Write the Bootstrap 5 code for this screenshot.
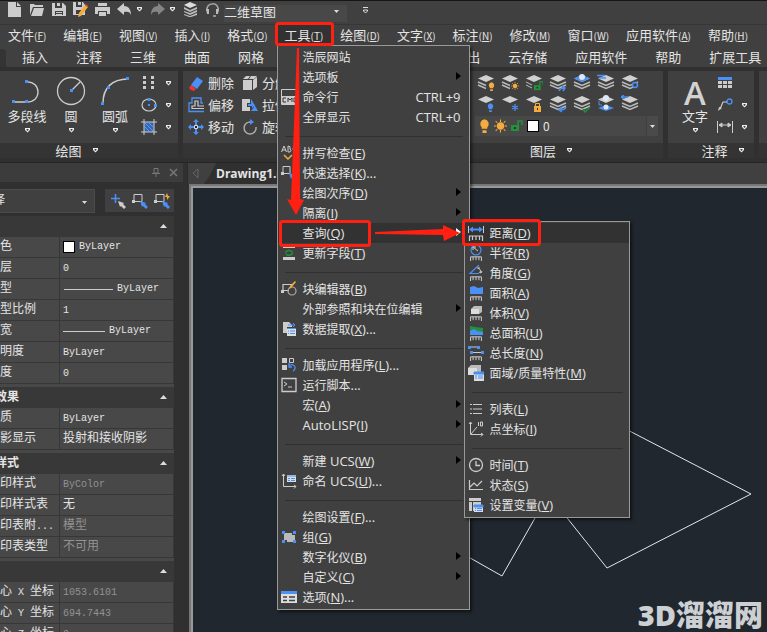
<!DOCTYPE html>
<html lang="zh-CN">
<head>
<meta charset="utf-8">
<meta name="viewport" content="width=device-width, initial-scale=1">
<title>Drawing1.dwg</title>
<link href="https://cdn.jsdelivr.net/npm/bootstrap@5.3.0/dist/css/bootstrap.min.css" rel="stylesheet">
<style>
:root{--face:#404040;--dark:#303030;--line:#353535;--ink:#e4e4e4;--blue:#4a90f7}
body{background:var(--dark);color:var(--ink);font:13px/20px "Open Sans","Noto Sans CJK SC",sans-serif;overflow:hidden}
button,select{font:inherit;color:inherit;border:0;background:none;padding:0}
svg{display:block;flex:none}
.cjk{font-family:"Noto Sans CJK SC",sans-serif}
.i15{width:15px;height:15px}.i16{width:16px;height:16px}.i18{width:18px;height:18px}.i32{width:32px;height:32px}
.caret{width:7px;height:5px}
.titlebar{height:25px;border-top:1px solid #161616;border-bottom:1px solid #363636;background:var(--face);gap:7px;padding:1px 0 0 7px}
.workspace{width:123px;height:17px;line-height:14px;padding-bottom:4px;background:#484848;appearance:none;border-radius:0}
.pick{position:relative}.pick svg{position:absolute;right:7px;top:7px;pointer-events:none}
.menubar{height:21px;background:var(--face);gap:1px}
.menubar .top-btn{padding:0 8px;height:20px;line-height:20px;white-space:nowrap}
.menubar small{font-size:10px}
.top-btn.open{background:#323232}
.tabs-row{height:21px;background:var(--face);padding-left:22px;gap:28px;line-height:21px}
.tabs-row button{white-space:nowrap}
.tab-now{width:6px;height:18px;background:#343434;margin:3px -12px 0 -22px;border-radius:0 4px 0 0;flex:none}
.ribbon{padding:4px 0;gap:5px;background:var(--dark);border-bottom:1px solid #252525}
.rpanel{background:var(--face);display:flex;flex-direction:column;flex:none}
.rbody{height:72px;padding:0 5px}
.rtitle{height:15px;background:#343434;line-height:13px;gap:10px}
.w-draw{width:178px}.w-mod{width:252px}.w-lay{width:223px}.w-ann{width:86px}
.bigbtn{width:44px;display:flex;flex-direction:column;align-items:center;line-height:17px;white-space:nowrap;padding-top:4px}
.bigbtn .glyph{font:600 33px/36px "Open Sans",sans-serif;color:#d2d2d2;height:32px}
.rows3{display:grid;grid-template-rows:repeat(3,22px);align-content:start;align-items:center;padding-top:1px}
.layers{display:grid;grid-template-columns:repeat(7,18px);gap:3px 6px;padding:3px 0 0 32px}
.laybox{margin:3px 0 0 30px;gap:1px;height:20px}
.laybox .cur{width:171px;background:#484848;gap:4px;padding-left:4px;font-size:12px}
.laybox button{width:11px;background:#4a4a4a}
.swatch{width:12px;height:12px;background:#fff;border:1px solid #000;flex:none}
/* property palette, partly scrolled off the left edge */
.palette{width:215px;margin-left:-32px;background:var(--dark);font:12px/20px "Liberation Mono","Noto Sans CJK SC",monospace;flex:none;overflow:hidden}
.phead{height:19px;background:#3c3c3c;gap:9px;padding-right:5px;color:#777}
.ptools{height:23px;margin:7px 0 4px;gap:10px}
.ptools .what{width:127px;background:var(--face);border:1px solid #4b4b4b;border-radius:0;appearance:none;height:24px;padding-left:0}
.ptools .pick{height:24px}.ptools .pick svg{top:11px}
.pbtns{background:var(--face);width:69px;height:23px;gap:6px}
.plist{width:206px;background:#484848}
.phd{height:21px;width:100%;background:#383838;padding:0 7px 0 3px;font-weight:700}
.plist table{table-layout:fixed;width:100%;margin-bottom:3px;border-collapse:separate;border-spacing:0}
.plist tr{height:21px}
.plist th,.plist td{height:21px;font-weight:400;padding:0;border:0 solid #373737;border-bottom-width:1px;white-space:nowrap;line-height:18px}
.plist th{width:92px;padding-left:20px;border-right-width:1px}
.plist td{padding-left:3px;border-right-width:1px}
.plist i{font-style:normal;font-size:10px;line-height:14px}
.off{color:#929292}
.docs{min-width:0}
.doctabs{height:21px;background:var(--face);border-left:1px solid #2b2b2b}
.doctab{background:#303030;padding:0 14px 0 12px;clip-path:polygon(12px 0,100% 0,100% 100%,0 100%,6px 12px);font-weight:700;font-size:12px}
.board{background:#20272f;border:solid #999;border-width:2px 0 0 2px;outline:2px solid #777;position:relative;overflow:hidden;margin-top:2px}
.board svg{position:absolute;left:0;top:0;width:100%;height:100%}
.mark3d{position:absolute;right:4px;bottom:0;font:900 29px/34px "Open Sans","Noto Sans CJK SC",sans-serif;color:#cdd0d3}
.cmenu{--bs-dropdown-min-width:0;background:var(--face);border:1px solid #999;border-radius:0;color:var(--ink);padding:1px 0 2px;margin:0;box-shadow:2px 2px 3px #0008;font:13px/20px "Open Sans","Noto Sans CJK SC",sans-serif}
.main-menu{left:0;top:20px;width:193px;z-index:10}
.sub-menu{left:186px;top:-2px;width:166px}
.cmenu .dropdown-item{height:20px;line-height:20px;padding:0 8px 0 3px;color:var(--ink);display:flex;align-items:center;gap:6px;font-size:13px}
.cmenu .dropdown-item:hover,.cmenu .dropdown-item.on{background:#323232}
.cmenu .dropdown-item b{font-weight:400;font-size:12px}
.cmenu .dropdown-item>span:first-of-type{white-space:pre}
.cmenu .gap-line{height:16px;padding:9px 6px 0 7px}
.cmenu .gap-line hr{margin:0;border:0;height:1px;background:#303030;opacity:1}
.cmenu .noico{padding-left:25px}
.more{margin:-3px 0 0 auto;width:5px;height:8px}
.redmarks{position:absolute;left:0;top:-6px;z-index:1200;pointer-events:none;overflow:visible}
</style>
</head>
<body>
<svg width="0" height="0" class="position-absolute" aria-hidden="true">
<symbol id="caret" viewBox="0 0 7 5"><path d="M1 0h5v2L3.500 4.500 1 2z" fill="#eee"/><path d="M2.500 1h2v1l-1 1-1-1z" fill="#404040"/></symbol>
<symbol id="drop" viewBox="0 0 7 5"><path d="M1 1h5L3.500 4z" fill="#ddd"/></symbol>
<symbol id="up" viewBox="0 0 7 5"><path d="M0 4h7L3.500 0z" fill="#ddd"/></symbol>
<symbol id="arrow" viewBox="0 0 5 8"><path d="M0 0l5 4-5 4z" fill="#000"/></symbol>
<symbol id="new" viewBox="0 0 15 15"><path d="M1 0h8v5h5v10H1zM10 0l4 4h-4z" fill="#ccc"/></symbol>
<symbol id="open" viewBox="0 0 15 15"><path d="M1 13V2h4l1 1h8v2H4z M5 6h10l-2 8H2z" fill="#ccc"/></symbol>
<symbol id="save" viewBox="0 0 15 15"><path d="M1 1h3v5h7V1h1l3 3v10H1z M6 1h3v3H6z" fill="#ccc"/><path d="M4 9h8v4H4z" fill="#404040"/><path d="M5 10h6v1H5zM5 12h6v1H5z" fill="#ccc"/></symbol>
<symbol id="saveas" viewBox="0 0 15 15"><path d="M0 0h3v5h6V0h1l2 3v10H0z M5 0h3v3H5z" fill="#ccc"/><path d="M3 8h6v4H3z" fill="#404040"/><path d="M12 3l3 2-7 9-3 1 1-4z" fill="#f5ac3c"/><path d="M12 3l1-1 2 2-1 1z" fill="#e44"/></symbol>
<symbol id="print" viewBox="0 0 15 15"><path d="M3 1h9v3H3zM0 5h15v7h-3V9H3v3H0zM4 10h7v4H4z" fill="#ccc"/></symbol>
<symbol id="undo" viewBox="0 0 15 15"><path d="M0 7l7-6v3c5 0 7 4 7 9-1-3-3-4-7-3v3z" fill="#ccc"/></symbol>
<symbol id="redo" viewBox="0 0 15 15"><path d="M15 7L8 1v3C3 4 1 8 1 13c1-3 3-4 7-3v3z" fill="#858585"/></symbol>
<symbol id="stack" viewBox="0 0 15 15"><path d="M1 3l6-3 7 3-7 3z" fill="#ddd"/><path d="M1 5l6 3 7-3v2L7 10 1 7zM1 9l6 2 7-3v2l-7 3-6-3zM1 12l6 2 7-3v2l-6 2H6l-5-2z" fill="#bbb"/></symbol>
<symbol id="ear" viewBox="0 0 15 15"><path d="M2 9C0 0 15-1 13 9M11 14h-3" fill="none" stroke="#aaa" stroke-width="1.500"/><path d="M1 7h3v5H2zM11 7h3l-1 5h-2z" fill="#bbb"/></symbol>
<symbol id="pline" viewBox="0 0 32 32"><path d="M15 7c16-1 16 21 0 20H3" fill="none" stroke="#ccc" stroke-width="1.300"/><path d="M14 5h3v3h-3zM1 25h3v3H1zM14 25h3v3h-3z" fill="#4a90f7"/></symbol>
<symbol id="circle" viewBox="0 0 32 32"><circle cx="16" cy="16" r="13.500" fill="none" stroke="#ccc" stroke-width="1.300"/><path d="M17 15l8-8" stroke="#ccc" stroke-width="1.300"/><path d="M15 14h3v3h-3z" fill="#4a90f7"/></symbol>
<symbol id="arc" viewBox="0 0 32 32"><path d="M4 28C4 13 13 4 29 4" fill="none" stroke="#ccc" stroke-width="1.500"/><path d="M27 2h3v3h-3zM8 11h3v3H8zM2 27h3v3H2z" fill="#4a90f7"/></symbol>
<symbol id="dots" viewBox="0 0 16 16"><path d="M2 1h3v3H2zM10 1h3v3h-3zM2 6h3v3H2zM10 6h3v3h-3zM2 11h3v3H2zM10 11h3v3h-3z" fill="#ccc"/></symbol>
<symbol id="ell" viewBox="0 0 16 16"><ellipse cx="8" cy="8" rx="7" ry="6" fill="none" stroke="#ccc" stroke-width="1.200"/><path d="M6.500 1h3v3h-3zM13 7h3v3h-3zM7 7h2v2H7z" fill="#4a90f7"/></symbol>
<symbol id="hatch" viewBox="0 0 16 16"><path d="M3 3h10v10H3z" fill="#3767ad"/><path d="M0 3h16M0 13h16M3 0v16M13 0v16" stroke="#ccc"/><path d="M4 8l4 4M4 4l8 8M8 4l4 4" stroke="#5b9bf5"/></symbol>
<symbol id="erase" viewBox="0 0 16 16"><path d="M9 2l6 4-6 8-6-4z" fill="#4a90f7"/><path d="M3 10l5 4-2 2-3-1-2-2z" fill="#e33"/></symbol>
<symbol id="offset" viewBox="0 0 16 16"><path d="M16 14.500H1V6h3V1h9v5h2" fill="none" stroke="#4a90f7" stroke-width="1.300"/><path d="M16 11.500H4V9h3V4h3v5h6" fill="none" stroke="#ccc" stroke-width="1.200"/></symbol>
<symbol id="move" viewBox="0 0 16 16"><path d="M8 0l3 3H9v3H7V3H5zM8 16l3-3H9v-3H7v3H5zM0 8l3-3v2h3v2H3v2zM16 8l-3-3v2h-3v2h3v2z" fill="#4a90f7"/><path d="M6.500 6.500h3v3h-3z" fill="#222" stroke="#ddd"/></symbol>
<symbol id="box" viewBox="0 0 16 16"><path d="M1 5h9v10H1zM1 4l3-3h4l-2 3zM9 1h6l-3 3H7zM11 5l4-3v10l-4 3z" fill="#ccc"/></symbol>
<symbol id="stretch" viewBox="0 0 16 16"><path d="M0 2h8v4H5v4h3v4H0z" fill="#ccc"/><path d="M9 2l7 12H9l3-4-3-2zM6 7h4V5l3 3-3 3V9H6z" fill="#4a90f7"/></symbol>
<symbol id="rot" viewBox="0 0 16 16"><path d="M9 3a6 6 0 1 0 5 5" fill="none" stroke="#aaa" stroke-width="1.500"/><path d="M8 0l4 3-4 3z" fill="#4a90f7"/></symbol>
<symbol id="lay" viewBox="0 0 18 18"><path d="M1 4.500L9 1l8 3.500L9 8z" fill="#d0d0d0"/><path d="M1 8l8 3.500L17 8M1 11l8 3.500 8-3.500" fill="none" stroke="#bbb" stroke-width="1.400"/></symbol>
<symbol id="lay1" viewBox="0 0 18 18"><path d="M1 4.500L9 1l8 3.500L9 8z" fill="#d0d0d0"/><path d="M1 8l8 3.500M1 11l8 3.500" fill="none" stroke="#bbb" stroke-width="1.400"/></symbol>
<symbol id="top" viewBox="0 0 18 18"><path d="M1 4.500L9 1l8 3.500L9 8z" fill="#d0d0d0"/></symbol>
<symbol id="bulb" viewBox="0 0 8 10"><path d="M4 0a3.500 3.500 0 0 1 2 6v1H2V6a3.500 3.500 0 0 1 2-6zM2.500 8h3v2h-3z"/></symbol>
<symbol id="sun" viewBox="0 0 16 16"><circle cx="8" cy="8" r="4.500" fill="#f5ac3c"/><path d="M8 0v3M8 13v3M0 8h3M13 8h3M2 2l2 2M12 12l2 2M2 14l2-2M12 4l2-2" stroke="#f5ac3c" stroke-width="1.300"/></symbol>
<symbol id="lock" viewBox="0 0 12 12"><path d="M0 5h8v6H0z" stroke="none"/><path d="M7 5V1h4v4" fill="none" stroke-width="1.500"/><path d="M3 7h2v2H3z" fill="#303030" stroke="none"/></symbol>
<symbol id="tbl" viewBox="0 0 16 16"><path d="M1 2h14v3H1z" fill="#4a90f7"/><path d="M1 6h4v3H1zM6 6h4v3H6zM11 6h4v3h-4zM1 10h4v3H1zM6 10h4v3H6zM11 10h4v3h-4z" fill="#ccc"/></symbol>
<symbol id="lead" viewBox="0 0 16 16"><circle cx="12.500" cy="4.500" r="2.500" fill="none" stroke="#4a90f7" stroke-width="1.300"/><path d="M10 5H6L3 12" fill="none" stroke="#ccc" stroke-width="1.200"/><path d="M1 14l1-4 3 1z" fill="#ccc"/></symbol>
<symbol id="dim" viewBox="0 0 16 16"><path d="M.5 2v12M15.500 2v12M2 6h12M2 6l3-2v4zM14 6l-3-2v4z" stroke="#ccc" fill="#ccc"/></symbol>
<symbol id="ruler" viewBox="0 0 16 6"><path d="M1.500 6V1h13v5M4.500 1v4M8 1v4M11.500 1v4" fill="none" stroke="#ccc" stroke-width="1.200"/></symbol>
<symbol id="cursor" viewBox="0 0 8 8"><path d="M0 0l6 2-1 1 3 3-2 2-3-3-1 1z"/></symbol>
</svg>

<div class="d-flex flex-column vh-100">
<header class="flex-shrink-0 position-relative z-3 cjk">
  <div class="titlebar d-flex align-items-start">
    <button aria-label="新建"><svg class="i15"><use href="#new"/></svg></button>
    <button aria-label="打开"><svg class="i15"><use href="#open"/></svg></button>
    <button aria-label="保存"><svg class="i15"><use href="#save"/></svg></button>
    <button aria-label="另存为"><svg class="i15"><use href="#saveas"/></svg></button>
    <button aria-label="打印"><svg class="i15"><use href="#print"/></svg></button>
    <button aria-label="撤销" class="d-flex align-items-center gap-1"><svg class="i15"><use href="#undo"/></svg><svg class="caret"><use href="#caret"/></svg></button>
    <button aria-label="重做" class="d-flex align-items-center gap-1"><svg class="i15"><use href="#redo"/></svg><svg class="caret"><use href="#caret"/></svg></button>
    <button aria-label="图层"><svg class="i15"><use href="#stack"/></svg></button>
    <div class="d-flex gap-1"><svg class="i15"><use href="#ear"/></svg>
      <div class="pick"><select class="workspace" aria-label="工作空间"><option>二维草图</option></select><svg class="caret"><use href="#drop"/></svg></div></div>
    <button aria-label="自定义" class="ms-2 mt-1"><svg width="7" height="8"><path d="M1 1.500h5" stroke="#ddd"/><path d="M1.500 4h4v1l-2 2-2-2z" fill="none" stroke="#ddd"/></svg></button>
  </div>

  <nav class="menubar d-flex">
    <button class="top-btn">文件<small>(<u>F</u>)</small></button>
    <button class="top-btn">编辑<small>(<u>E</u>)</small></button>
    <button class="top-btn">视图<small>(<u>V</u>)</small></button>
    <button class="top-btn">插入<small>(<u>I</u>)</small></button>
    <button class="top-btn">格式<small>(<u>O</u>)</small></button>
    <div class="position-relative">
      <button class="top-btn open">工具<small>(<u>T</u>)</small></button>
      <div class="dropdown-menu show cmenu main-menu">
        <button class="dropdown-item noico"><span><b>浩辰网站</b></span></button>
        <button class="dropdown-item noico"><span><b>选项板</b></span><svg class="more"><use href="#arrow"/></svg></button>
        <button class="dropdown-item"><svg class="i16"><path d="M.5.500h15v15H.5z" fill="none" stroke="#ccc"/><path d="M1 7h15v9H1z" fill="#ccc"/><path d="M5 9H2v4h3M7 13V9l2 2 2-2v4M13 13V9h2v4z" fill="none" stroke="#333"/></svg><span><b>命令行</b></span><span class="ms-auto">CTRL+9</span></button>
        <button class="dropdown-item noico"><span><b>全屏显示</b></span><span class="ms-auto">CTRL+0</span></button>
        <div class="gap-line"><hr></div>
        <button class="dropdown-item"><svg class="i16" viewBox="0 0 16 16"><path d="M.5 7L3 1l2.500 6M1 5h4M7 1v6h2q2-2 0-3 1-3-2-3M15 2q-3-1-3 2t3 2" fill="none" stroke="#ccc"/><path d="M3 10l4 4 4-4" fill="none" stroke="#f5ac3c" stroke-width="1.500"/></svg><span><b>拼写检查</b>(<u>E</u>)</span></button>
        <button class="dropdown-item"><svg class="i16" viewBox="0 0 16 16"><path d="M2 1.500h7v7H2z" fill="none" stroke="#ccc"/><path d="M0 7h3v3H0z" fill="#ccc"/><use href="#cursor" x="8" y="8" width="8" height="8" fill="#4a90f7"/></svg><span><b>快速选择</b>(<u>K</u>)...</span></button>
        <button class="dropdown-item noico"><span><b>绘图次序</b>(<u>D</u>)</span><svg class="more"><use href="#arrow"/></svg></button>
        <button class="dropdown-item noico"><span><b>隔离</b>(<u>I</u>)</span><svg class="more"><use href="#arrow"/></svg></button>
        <div class="position-relative">
          <button class="dropdown-item noico on"><span><b>查询</b>(<u>Q</u>)</span><svg class="more" viewBox="0 0 5 8"><path d="M0 0l5 4-5 4z" fill="#fff"/></svg></button>
          <div class="dropdown-menu show cmenu sub-menu">
            <button class="dropdown-item on"><svg class="i16" viewBox="0 0 16 16"><path d="M.5 1v7M15.500 1v7" stroke="#ccc"/><path d="M1 4.500l4-3v2h6v-2l4 3-4 3v-2H5v2z" fill="#4a90f7"/><use href="#ruler" y="10" width="16" height="6"/></svg><span><b>距离</b>(<u>D</u>)</span></button>
            <button class="dropdown-item"><svg class="i16" viewBox="0 0 16 16"><circle cx="8" cy="5" r="5" fill="none" stroke="#4a90f7" stroke-width="1.200"/><path d="M5 2l5 4M5 2h3M5 2v3" stroke="#ccc"/><use href="#ruler" x="1" y="11" width="14" height="5"/></svg><span><b>半径</b>(<u>R</u>)</span></button>
            <button class="dropdown-item"><svg class="i16" viewBox="0 0 16 16"><path d="M11 0L2 8.500h9" fill="none" stroke="#4a90f7" stroke-width="1.200"/><path d="M10 3q3 1 3 5M9 3h3M11 7l2 1 1-2" fill="none" stroke="#ccc"/><use href="#ruler" x="1" y="11" width="14" height="5"/></svg><span><b>角度</b>(<u>G</u>)</span></button>
            <button class="dropdown-item"><svg class="i16" viewBox="0 0 16 16"><path d="M2 2l4-1 4 2 5-1v7H2z" fill="#4a90f7"/><use href="#ruler" x="1" y="11" width="14" height="5"/></svg><span><b>面积</b>(<u>A</u>)</span></button>
            <button class="dropdown-item"><svg class="i16" viewBox="0 0 16 16"><path d="M3 4l3-3h8v6l-3 2H3z" fill="#bbb"/><path d="M3 4h8v5H3z" fill="#ddd"/><use href="#ruler" x="1" y="11" width="14" height="5"/></svg><span><b>体积</b>(<u>V</u>)</span></button>
            <button class="dropdown-item"><svg class="i16" viewBox="0 0 16 16"><path d="M2 1l5 1 8 1v6H2z" fill="#21913c"/><path d="M2 6l4-2 3 2 6 1v3H2z" fill="#4a90f7"/><use href="#ruler" x="1" y="11" width="14" height="5"/></svg><span><b>总面积</b>(<u>U</u>)</span></button>
            <button class="dropdown-item"><svg class="i16" viewBox="0 0 16 16"><path d="M1 2h10M4 7.500h10" stroke="#ccc"/><path d="M0 1h3v3H0zM9 1h3v3H9zM2 6h3v3H2zM13 6h3v3h-3z" fill="#4a90f7"/><use href="#ruler" y="11" width="16" height="5"/></svg><span><b>总长度</b>(<u>N</u>)</span></button>
            <button class="dropdown-item"><svg class="i16" viewBox="0 0 16 16"><path d="M0 3l3-3h10v7l-3 3H0z" fill="#bbb"/><path d="M0 3h9v7H0z" fill="#ddd"/><path d="M6 7h10v9H6z" fill="#ddd"/><path d="M6 7h10v2H6zM7 11h2M10 11h5M7 13h2M10 13h5" fill="#4a90f7" stroke="#4a90f7"/></svg><span><b>面域</b>/<b>质量特性</b>(<u>M</u>)</span></button>
            <div class="gap-line"><hr></div>
            <button class="dropdown-item"><svg class="i16" viewBox="0 0 16 16"><path d="M2 3.500h2M5 3.500h9M2 8h2M5 8h9M2 12.500h2M5 12.500h9" stroke="#ccc"/></svg><span><b>列表</b>(<u>L</u>)</span></button>
            <button class="dropdown-item"><svg class="i16" viewBox="0 0 16 16"><path d="M2.500 1v12.500H15M3 13l6-7M1 3l1.500-2L4 3M13 12l2 1.500-2 2M10.500 1v4M12.500 1v4h2V1z" fill="none" stroke="#ccc"/></svg><span><b>点坐标</b>(<u>I</u>)</span></button>
            <div class="gap-line"><hr></div>
            <button class="dropdown-item"><svg class="i16" viewBox="0 0 16 16"><circle cx="8" cy="8" r="6.500" fill="none" stroke="#ccc" stroke-width="1.300"/><path d="M8 4v4.500h4" fill="none" stroke="#ccc" stroke-width="1.300"/></svg><span><b>时间</b>(<u>T</u>)</span></button>
            <button class="dropdown-item"><svg class="i16" viewBox="0 0 16 16"><path d="M1.500 3v9.500H15M2 10l4-4 3 3 5-5" fill="none" stroke="#ccc" stroke-width="1.200"/></svg><span><b>状态</b>(<u>S</u>)</span></button>
            <button class="dropdown-item"><svg class="i16" viewBox="0 0 16 16"><path d="M1 1h12v3H1zM1 5h3v9H1zM5 5h8v9H5z" fill="#ccc"/><path d="M6 8h9v7H6z" fill="#ddd"/><path d="M6 8h9v2H6zM7 11.500h1M9 11.500h5M7 13.500h1M9 13.500h5" fill="#4a90f7" stroke="#4a90f7"/></svg><span><b>设置变量</b>(<u>V</u>)</span></button>
          </div>
        </div>
        <button class="dropdown-item"><svg class="i16" viewBox="0 0 16 16"><path d="M2 0h12v3H2zM2 12h12v3H2z" fill="#ccc"/><path d="M5 8a3 2 0 0 1 6-1M11 7a3 2 0 0 1-6 2" fill="none" stroke="#21913c" stroke-width="1.500"/></svg><span><b>更新字段</b>(<u>T</u>)</span></button>
        <div class="gap-line"><hr></div>
        <button class="dropdown-item"><svg class="i16" viewBox="0 0 16 16"><path d="M12 3.500H2v6h6" fill="none" stroke="#ccc" stroke-width="1.200"/><circle cx="11" cy="10" r="4" fill="none" stroke="#aaa" stroke-width="1.200"/><path d="M0 9h3v3H0z" fill="#ccc"/><path d="M8 8l1-3 5-5 1 1-5 6z" fill="#f5ac3c"/></svg><span><b>块编辑器</b>(<u>B</u>)</span></button>
        <button class="dropdown-item noico"><span><b>外部参照和块在位编辑</b></span><svg class="more"><use href="#arrow"/></svg></button>
        <button class="dropdown-item"><svg class="i16" viewBox="0 0 16 16"><path d="M2 1h6l3 3v2H6v6H2z" fill="#ccc"/><path d="M7 4h7M12 2l2 2-2 2" stroke="#4a90f7" fill="none"/><path d="M6 7h9v8H6z" fill="#ddd"/><path d="M6 7.500h9M7 10h1M9 10h5M7 12.500h1M9 12.500h5" stroke="#4a90f7"/></svg><span><b>数据提取</b>(<u>X</u>)...</span></button>
        <div class="gap-line"><hr></div>
        <button class="dropdown-item"><svg class="i16" viewBox="0 0 16 16"><path d="M1 1h5v5H1zM1 8h5v5H1z" fill="#ccc"/><path d="M8.500 1.500h4v4h-4z" fill="none" stroke="#ccc"/><path d="M8 9c4-4 9 2 4 5M8 6v4h3" fill="none" stroke="#4a90f7" stroke-width="1.300"/></svg><span><b>加载应用程序</b>(<u>L</u>)...</span></button>
        <button class="dropdown-item"><svg class="i16" viewBox="0 0 16 16"><path d="M1 1.500h14v13H1z" fill="none" stroke="#ccc" stroke-width="1.300"/><path d="M3 5l3 2-3 2M7 10h4" fill="none" stroke="#ccc"/></svg><span><b>运行脚本</b>...</span></button>
        <button class="dropdown-item noico"><span><b>宏</b>(<u>A</u>)</span><svg class="more"><use href="#arrow"/></svg></button>
        <button class="dropdown-item noico"><span>AutoLISP(<u>I</u>)</span><svg class="more"><use href="#arrow"/></svg></button>
        <div class="gap-line"><hr></div>
        <button class="dropdown-item noico"><span><b>新建</b> UCS(<u>W</u>)</span><svg class="more"><use href="#arrow"/></svg></button>
        <button class="dropdown-item"><svg class="i16" viewBox="0 0 16 16"><path d="M2.500 1v12.500H15M1 3l1.500-2L4 3M13 12l2 1.500-2 2" fill="none" stroke="#ccc"/><path d="M6 2h9v7H6z" fill="#ddd"/><path d="M6 3h9M7 5.500h2M10 5.500h4M7 7.500h2M10 7.500h4" stroke="#4a90f7"/></svg><span><b>命名</b> UCS(<u>U</u>)...</span></button>
        <div class="gap-line"><hr></div>
        <button class="dropdown-item noico"><span><b>绘图设置</b>(<u>F</u>)...</span></button>
        <button class="dropdown-item"><svg class="i16" viewBox="0 0 16 16"><path d="M3 4h8v3H7v4H3zM6 6h8v7H6z" fill="#bbb"/><path d="M1 2h3v3H1zM12 2h3v3h-3zM1 11h3v3H1zM12 11h3v3h-3z" fill="#4a90f7"/></svg><span><b>组</b>(<u>G</u>)</span></button>
        <button class="dropdown-item noico"><span><b>数字化仪</b>(<u>B</u>)</span><svg class="more"><use href="#arrow"/></svg></button>
        <button class="dropdown-item noico"><span><b>自定义</b>(<u>C</u>)</span><svg class="more"><use href="#arrow"/></svg></button>
        <button class="dropdown-item"><svg class="i16" viewBox="0 0 16 16"><path d="M0 2h16v3H0z" fill="#4a90f7"/><path d="M0 5h16v9H0z" fill="#ddd"/><path d="M2 8h4M8 8h6M2 11.500h4M8 11.500h6" stroke="#404040" stroke-width="1.500"/></svg><span><b>选项</b>(<u>N</u>)...</span></button>
      </div>
      <svg class="redmarks" width="280" height="230" viewBox="276 19 280 230" aria-hidden="true">
        <g fill="none" stroke="#ff2012" stroke-width="3"><rect x="275.500" y="23.500" width="56" height="21" rx="2"/><rect x="279.500" y="221.500" width="89" height="24" rx="2"/><rect x="462.500" y="220.500" width="76" height="24" rx="2"/></g>
        <path d="M296 48h2l1 151 4 1-8 15-9-16 4 1zM374 232l68-3v-4l17 8-16 8-1-6-68-1z" fill="#ff2012"/>
      </svg>
    </div>
    <button class="top-btn">绘图<small>(<u>D</u>)</small></button>
    <button class="top-btn">文字<small>(<u>X</u>)</small></button>
    <button class="top-btn">标注<small>(<u>N</u>)</small></button>
    <button class="top-btn">修改<small>(<u>M</u>)</small></button>
    <button class="top-btn">窗口<small>(<u>W</u>)</small></button>
    <button class="top-btn">应用软件<small>(<u>A</u>)</small></button>
    <button class="top-btn">帮助<small>(<u>H</u>)</small></button>
  </nav>

  <div class="tabs-row d-flex">
    <span class="tab-now"></span>
    <button>插入</button><button>注释</button><button>三维</button><button>曲面</button><button>网格</button><button>参数</button><button>视图</button><button>管理</button><button>输出</button><button>云存储</button><button>应用软件</button><button>帮助</button><button>扩展工具</button>
  </div>

  <div class="ribbon d-flex">
    <section class="rpanel w-draw">
      <div class="rbody d-flex">
        <button class="bigbtn"><svg class="i32"><use href="#pline"/></svg>多段线<svg class="caret mt-1"><use href="#caret"/></svg></button>
        <button class="bigbtn"><svg class="i32"><use href="#circle"/></svg>圆<svg class="caret mt-1"><use href="#caret"/></svg></button>
        <button class="bigbtn"><svg class="i32"><use href="#arc"/></svg>圆弧<svg class="caret mt-1"><use href="#caret"/></svg></button>
        <div class="rows3 ps-1">
          <button class="d-flex align-items-center gap-2" aria-label="点"><svg class="i16"><use href="#dots"/></svg><svg class="caret"><use href="#caret"/></svg></button>
          <button class="d-flex align-items-center gap-2" aria-label="椭圆"><svg class="i16"><use href="#ell"/></svg><svg class="caret"><use href="#caret"/></svg></button>
          <button class="d-flex align-items-center gap-2" aria-label="填充"><svg class="i16"><use href="#hatch"/></svg><svg class="caret"><use href="#caret"/></svg></button>
        </div>
      </div>
      <div class="rtitle d-flex align-items-center justify-content-center pe-4">绘图<svg class="caret"><use href="#caret"/></svg></div>
    </section>
    <section class="rpanel w-mod">
      <div class="rbody d-flex gap-2">
        <div class="rows3">
          <button class="d-flex align-items-center gap-1"><svg class="i16"><use href="#erase"/></svg>删除</button>
          <button class="d-flex align-items-center gap-1"><svg class="i16"><use href="#offset"/></svg>偏移</button>
          <button class="d-flex align-items-center gap-1"><svg class="i16"><use href="#move"/></svg>移动</button>
        </div>
        <div class="rows3">
          <button class="d-flex align-items-center gap-1"><svg class="i16"><use href="#box"/></svg>分解</button>
          <button class="d-flex align-items-center gap-1"><svg class="i16"><use href="#stretch"/></svg>拉伸</button>
          <button class="d-flex align-items-center gap-1"><svg class="i16"><use href="#rot"/></svg>旋转</button>
        </div>
      </div>
      <div class="rtitle"></div>
    </section>
    <section class="rpanel w-lay">
      <div class="rbody">
        <div class="layers">
          <svg class="i18"><use href="#lay1"/><use href="#bulb" x="11" y="8" width="7" height="9" fill="#f5ac3c"/></svg>
          <svg class="i18"><use href="#lay1"/><use href="#sun" x="10" y="8" width="8" height="8"/></svg>
          <svg class="i18"><use href="#top"/><path d="M1 8l6 3M1 11l6 3" stroke="#bbb"/><use href="#lock" x="9" y="7" width="10" height="10" fill="#21913c" stroke="#21913c"/></svg>
          <svg class="i18"><use href="#lay"/><path d="M10 17q1-3 6-3M13 12l3 2-2 3" fill="none" stroke="#4a90f7" stroke-width="1.500"/></svg>
          <svg class="i18"><use href="#lay"/><path d="M1 4.500L9 1l8 3.500L9 8z" fill="#4a90f7"/><circle cx="9" cy="3" r="3" fill="#dde9f5"/></svg>
          <svg class="i18"><use href="#lay"/><path d="M0 1.500h8M2 4h7" stroke="#4a90f7" stroke-width="1.500"/></svg>
          <svg class="i18"><use href="#lay"/><circle cx="14" cy="11" r="2.500" fill="#404040" stroke="#4a90f7" stroke-width="1.500"/></svg>
          <svg class="i18"><use href="#top"/><use href="#bulb" x="10" y="8" width="7" height="9" fill="#4a90f7"/></svg>
          <svg class="i18"><use href="#top"/><path d="M14 9v7M11 11l6 3M11 14l6-3" stroke="#4a90f7" stroke-width="1.300"/></svg>
          <svg class="i18"><use href="#top"/><path d="M9 11h7v6H9z" fill="#f5ac3c"/><path d="M10.500 11V8.500h4V11" fill="none" stroke="#f5ac3c"/><path d="M12 13h1v2h-1z" fill="#333"/></svg>
          <svg class="i18"><use href="#lay"/><path d="M17 12q-1 3-6 3M13 12l-3 3 3 2" fill="none" stroke="#4a90f7" stroke-width="1.500"/></svg>
          <svg class="i18"><use href="#lay"/><path d="M10 14l2 3 5-5" fill="none" stroke="#21913c" stroke-width="1.500"/></svg>
          <svg class="i18"><use href="#top"/><path d="M1 13l8-3 8 3-8 3z" fill="#4a90f7"/><circle cx="9" cy="3" r="3" fill="#dde9f5"/><circle cx="9" cy="12" r="2.500" fill="#dde9f5"/><path d="M2 6v4h3" fill="none" stroke="#4a90f7"/></svg>
          <svg class="i18"><use href="#lay"/><path d="M0 2h7M3 0L0 2l3 2" fill="none" stroke="#4a90f7" stroke-width="1.300"/></svg>
        </div>
        <div class="laybox d-flex">
          <div class="cur d-flex align-items-center"><svg width="11" height="14" fill="#f5ac3c"><use href="#bulb" width="11" height="14"/></svg><svg width="13" height="14"><use href="#sun"/></svg><svg width="12" height="12" fill="#21913c" stroke="#21913c"><use href="#lock"/></svg><span class="swatch"></span>0</div>
          <button aria-label="选择图层" class="d-flex align-items-center justify-content-center"><svg width="7" height="5"><use href="#drop"/></svg></button>
        </div>
      </div>
      <div class="rtitle d-flex align-items-center justify-content-center">图层<svg class="caret"><use href="#caret"/></svg></div>
    </section>
    <section class="rpanel w-ann">
      <div class="rbody d-flex">
        <button class="bigbtn"><span class="glyph">A</span>文字<svg class="caret mt-1"><use href="#caret"/></svg></button>
        <div class="rows3">
          <button aria-label="表格"><svg class="i16"><use href="#tbl"/></svg></button>
          <button class="d-flex align-items-center gap-2" aria-label="引线"><svg class="i16"><use href="#lead"/></svg><svg class="caret"><use href="#caret"/></svg></button>
          <button class="d-flex align-items-center gap-2" aria-label="标注"><svg class="i16"><use href="#dim"/></svg><svg class="caret"><use href="#caret"/></svg></button>
        </div>
      </div>
      <div class="rtitle d-flex align-items-center justify-content-center ps-4">注释<svg class="caret"><use href="#caret"/></svg></div>
    </section>
    <section class="rpanel flex-grow-1"><div class="rbody"></div><div class="rtitle"></div></section>
  </div>
</header>

<main class="d-flex flex-grow-1 overflow-hidden">
  <aside class="palette">
    <div class="phead d-flex align-items-center justify-content-end">
      <button aria-label="固定"><svg width="8" height="9"><path d="M2 .5h4V5H2zM0 5.500h8M4 5v4" fill="none" stroke="#777"/></svg></button>
      <button aria-label="关闭"><svg width="9" height="9"><path d="M1 1l7 7M8 1L1 8" stroke="#777" stroke-width="1.500"/></svg></button>
    </div>
    <div class="ptools d-flex">
      <div class="pick"><select class="what" aria-label="对象"><option>无选择</option></select><svg class="caret"><use href="#drop"/></svg></div>
      <div class="pbtns d-flex align-items-center justify-content-center">
        <button aria-label="拾取"><svg class="i16" viewBox="0 0 16 16"><path d="M5.500 1v9M1 5.500h9" stroke="#4a90f7" stroke-width="1.500"/><use href="#cursor" x="8" y="8" width="8" height="8" fill="#ccc"/></svg></button>
        <button aria-label="选择对象"><svg class="i16" viewBox="0 0 16 16"><path d="M2 1.500h8v7H2z" fill="none" stroke="#ccc"/><path d="M0 7h3v3H0z" fill="#ccc"/><use href="#cursor" x="8" y="8" width="8" height="8" fill="#4a90f7"/></svg></button>
        <button aria-label="快速选择"><svg class="i16" viewBox="0 0 16 16"><path d="M2 1.500h8v7H2z" fill="none" stroke="#ccc"/><path d="M0 7h3v3H0z" fill="#ccc"/><path d="M13 0l-2 4h2v3l3-4h-2z" fill="#f5ac3c"/><use href="#cursor" x="8" y="8" width="8" height="8" fill="#4a90f7"/></svg></button>
      </div>
    </div>
    <div class="plist">
      <button class="phd d-flex align-items-center justify-content-between">常规<svg class="caret"><use href="#up"/></svg></button>
      <table>
        <tr><th scope="row">颜色</th><td><div class="d-flex align-items-center"><span class="swatch me-1"></span><i>ByLayer</i></div></td></tr>
        <tr><th scope="row">图层</th><td><i>0</i></td></tr>
        <tr><th scope="row">线型</th><td><div class="d-flex align-items-center gap-1"><svg width="50" height="1"><path d="M1 0h49v1H1z" fill="#ccc"/></svg><i>ByLayer</i></div></td></tr>
        <tr><th scope="row">线型比例</th><td><i>1</i></td></tr>
        <tr><th scope="row">线宽</th><td><div class="d-flex align-items-center gap-1"><svg width="42" height="1"><path d="M0 0h42v1H0z" fill="#ccc"/></svg><i>ByLayer</i></div></td></tr>
        <tr><th scope="row">透明度</th><td><i>ByLayer</i></td></tr>
        <tr><th scope="row">厚度</th><td><i>0</i></td></tr>
      </table>
      <button class="phd d-flex align-items-center justify-content-between">三维效果<svg class="caret"><use href="#up"/></svg></button>
      <table>
        <tr><th scope="row">材质</th><td><i>ByLayer</i></td></tr>
        <tr><th scope="row">阴影显示</th><td>投射和接收阴影</td></tr>
      </table>
      <button class="phd d-flex align-items-center justify-content-between">打印样式<svg class="caret"><use href="#up"/></svg></button>
      <table>
        <tr><th scope="row">打印样式</th><td class="off"><i>ByColor</i></td></tr>
        <tr><th scope="row">打印样式表</th><td>无</td></tr>
        <tr><th scope="row">打印表附<i>...</i></th><td class="off">模型</td></tr>
        <tr><th scope="row">打印表类型</th><td class="off">不可用</td></tr>
      </table>
      <button class="phd d-flex align-items-center justify-content-between">视图<svg class="caret"><use href="#up"/></svg></button>
      <table>
        <tr><th scope="row">中心<i> X </i>坐标</th><td class="off"><i>1053.6101</i></td></tr>
        <tr><th scope="row">中心<i> Y </i>坐标</th><td class="off"><i>694.7443</i></td></tr>
        <tr><th scope="row">中心<i> Z </i>坐标</th><td class="off"><i>0</i></td></tr>
      </table>
    </div>
  </aside>
  <section class="docs d-flex flex-column flex-grow-1 ps-1">
    <div class="doctabs d-flex flex-shrink-0 ps-1">
      <svg width="12" height="21"><path d="M6 6v9L1 10z" fill="none" stroke="#666"/></svg>
      <button class="doctab">Drawing1.dwg</button>
    </div>
    <div class="board flex-grow-1 ms-1">
      <svg aria-hidden="true"><path d="M396 222l162 84-144 74-59-74M362 295l-53 93-53-30" fill="none" stroke="#e6e6e6"/></svg>
      <div class="mark3d">3D溜溜网</div>
    </div>
  </section>
</main>
</div>
<script src="https://cdn.jsdelivr.net/npm/bootstrap@5.3.0/dist/js/bootstrap.bundle.min.js"></script>
</body>
</html>
